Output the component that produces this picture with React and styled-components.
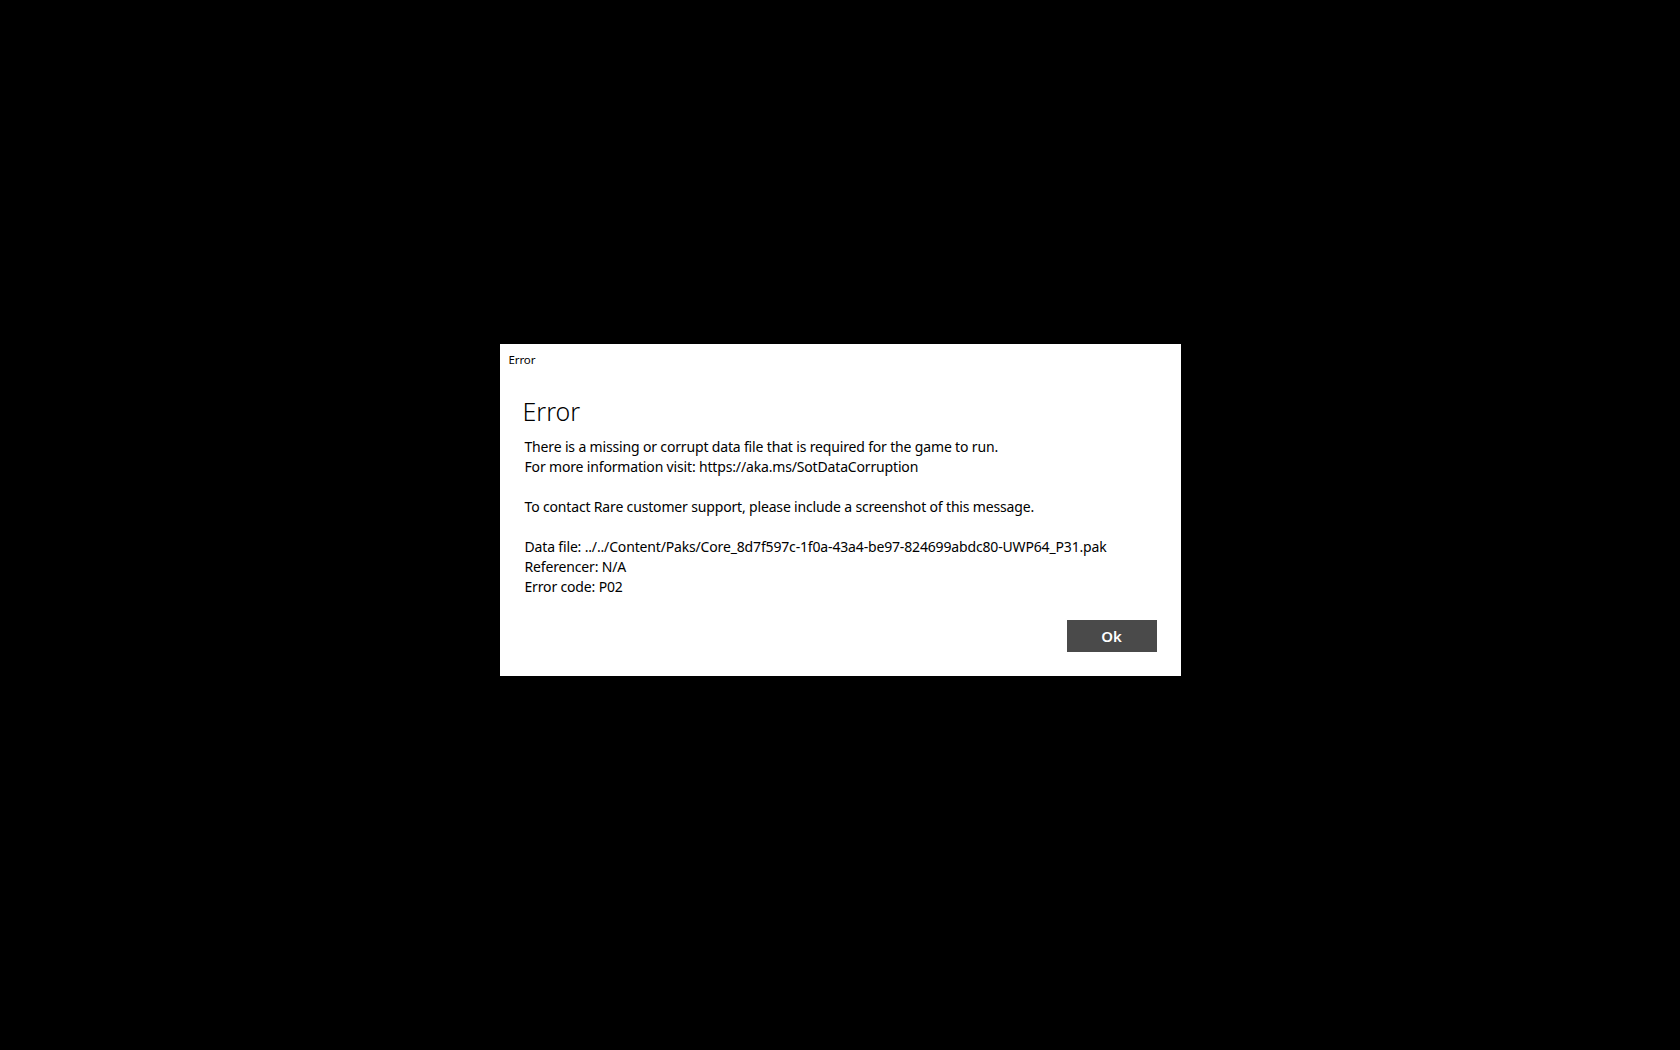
import React from 'react';
import styled, { createGlobalStyle } from 'styled-components';

const GlobalStyle = createGlobalStyle`
  html, body {
    margin: 0;
    padding: 0;
    background: #000;
  }
  body {
    font-family: "Segoe UI", "Noto Sans", "Open Sans", sans-serif;
  }
`;

const Screen = styled.div`
  width: 100vw;
  height: 100vh;
  background: #000;
  display: flex;
  justify-content: center;
  align-items: flex-start;
  padding-top: 344px;
  box-sizing: border-box;
`;

const Dialog = styled.div`
  width: 681px;
  background: #fff;
  box-sizing: border-box;
  display: flex;
  flex-direction: column;
`;

const TitleBar = styled.div`
  height: 30px;
  padding: 8px 0 0 9px;
  box-sizing: border-box;
  font-size: 11.5px;
  line-height: 16px;
  letter-spacing: -0.1px;
  color: #000;
`;

const Body = styled.div`
  padding: 0 24px 24px 23px;
  display: flex;
  flex-direction: column;
`;

const Heading = styled.h1`
  margin: 21px 0 0;
  font-size: 25px;
  font-weight: 300;
  line-height: 32px;
  color: #000;
`;

const Message = styled.div`
  margin-top: 10px;
  padding-left: 2px;
  font-size: 14px;
  line-height: 20px;
  letter-spacing: -0.16px;
  color: #000;
  white-space: pre;
`;

const Footer = styled.div`
  display: flex;
  justify-content: flex-end;
  margin-top: 23px;
`;

const Button = styled.button`
  width: 90px;
  height: 32px;
  border: none;
  background: #4a4a4a;
  color: #fff;
  font-family: inherit;
  font-size: 15px;
  font-weight: 600;
  cursor: pointer;
`;

const lines = [
  'There is a missing or corrupt data file that is required for the game to run.',
  'For more information visit: https://aka.ms/SotDataCorruption',
  '',
  'To contact Rare customer support, please include a screenshot of this message.',
  '',
  'Data file: ../../Content/Paks/Core_8d7f597c-1f0a-43a4-be97-824699abdc80-UWP64_P31.pak',
  'Referencer: N/A',
  'Error code: P02',
];

const App = () => (
  <>
    <GlobalStyle />
    <Screen>
      <Dialog>
        <TitleBar>Error</TitleBar>
        <Body>
          <Heading>Error</Heading>
          <Message>{lines.join('\n')}</Message>
          <Footer>
            <Button>Ok</Button>
          </Footer>
        </Body>
      </Dialog>
    </Screen>
  </>
);

export default App;
